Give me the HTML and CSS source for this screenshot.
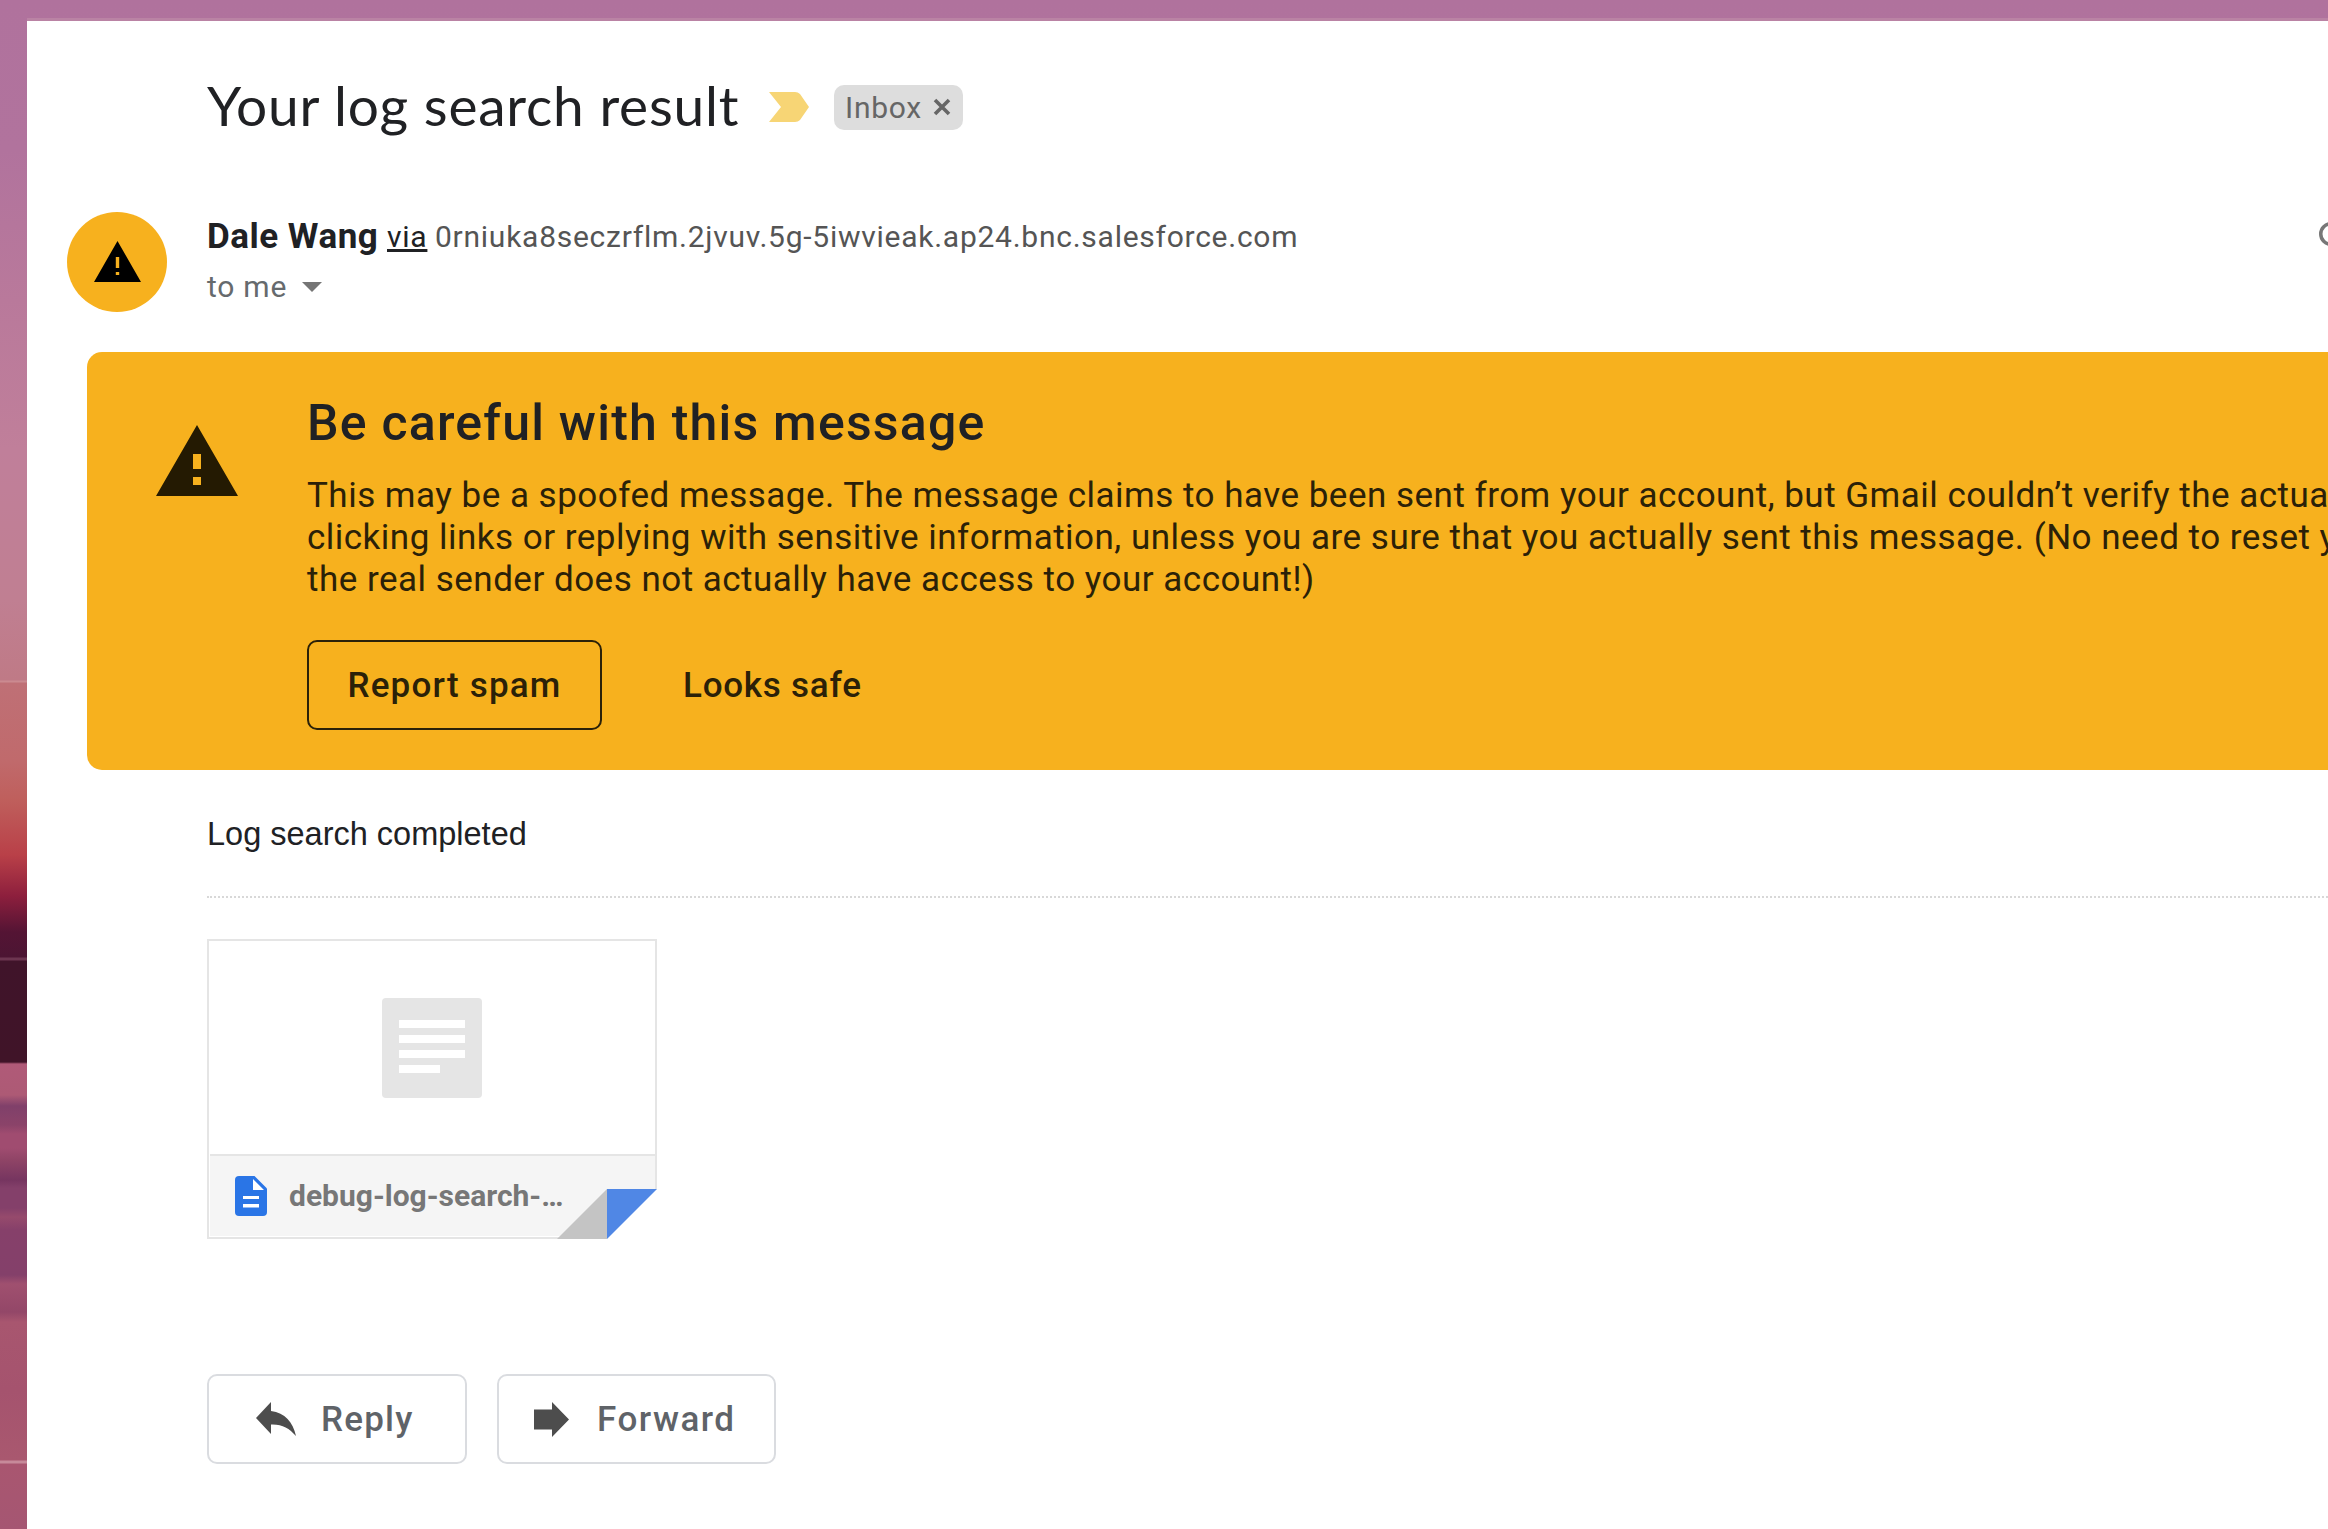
FILE: index.html
```html
<!DOCTYPE html>
<html lang="en">
<head>
<meta charset="utf-8">
<title>Your log search result</title>
<link rel="stylesheet" href="styles.css">
</head>
<body>
<main class="mail">
  <header class="subject">
    <h1 class="subject-title">Your log search result</h1>
    <svg class="marker" viewBox="0 0 40 30"><path d="M0 0H26Q29 0 31 2L40 15L31 28Q29 30 26 30H0L12 15Z" fill="#f7d575"/></svg>
    <span class="chip"><span class="chip-text">Inbox</span><svg class="chip-x" viewBox="0 0 18 18"><path d="M2 2L16 16M16 2L2 16" stroke="#666" stroke-width="3.6"/></svg></span>
  </header>

  <section class="sender">
    <span class="avatar"><svg class="avatar-icon" viewBox="0 0 47 41"><path fill-rule="evenodd" d="M23.500 0L47 41H0ZM21.800 16V27H25.200V16ZM21.800 31V34H25.200V31Z"/></svg></span>
    <div class="who">
      <p class="from"><b class="name">Dale Wang</b><a class="via">via</a><span class="domain">0rniuka8seczrflm.2jvuv.5g-5iwvieak.ap24.bnc.salesforce.com</span></p>
      <p class="to"><span class="to-text">to me</span><svg class="caret" viewBox="0 0 20 10"><path d="M0 0H20L10 10Z" fill="#757575"/></svg></p>
    </div>
    <svg class="clip" viewBox="0 0 30 24"><path d="M30 1.750H12A10.250 10.250 0 0 0 12 22.250H30" fill="none" stroke="#777" stroke-width="3.500"/></svg>
  </section>

  <section class="banner">
    <svg class="banner-icon" viewBox="0 0 82 71"><path fill="#241a02" fill-rule="evenodd" d="M41 0L82 71H0ZM37 29V44H45V29ZM37 52V60H45V52Z"/></svg>
    <div class="banner-body">
      <h2 class="banner-title">Be careful with this message</h2>
      <p class="banner-text">This may be a spoofed message. The message claims to have been sent from your account, but Gmail couldn’t verify the actual source. Avoid<br>clicking links or replying with sensitive information, unless you are sure that you actually sent this message. (No need to reset your password,<br>the real sender does not actually have access to your account!)</p>
      <div class="banner-actions">
        <button class="report">Report spam</button>
        <button class="safe">Looks safe</button>
      </div>
    </div>
  </section>

  <section class="content">
    <p class="message">Log search completed</p>
    <div class="attachment">
      <div class="preview"><svg class="preview-icon" viewBox="0 0 100 100"><rect width="100" height="100" rx="4" fill="#e5e5e5"/><path d="M17 22H83V30H17ZM17 37H83V45H17ZM17 52H83V60H17ZM17 67H58V75H17Z" fill="#fff"/></svg></div>
      <div class="file">
        <svg class="file-icon" viewBox="0 0 32 40"><path d="M4 0H19.500L32 12.500V36Q32 40 28 40H4Q0 40 0 36V4Q0 0 4 0Z" fill="#2a75e6"/><path d="M18 3V14H29ZM8 20H24V23H8ZM8 28H24V31.500H8Z" fill="#fff"/></svg>
        <span class="file-name">debug-log-search-…</span>
      </div>
      <svg class="fold" viewBox="0 0 100 50"><path d="M50 0H100V50H50Z" fill="#fff"/><path d="M50 0V50H0Z" fill="#c4c4c4"/><path d="M50 0H100L50 50Z" fill="#5087e5"/></svg>
    </div>
    <div class="actions">
      <button class="action reply"><svg class="reply-icon" viewBox="0 0 40 34"><path d="M15 0V9C29 11 37 20 40 34C33 26 26 22 15 22.500V32L0 16Z" fill="#4d4d4d"/></svg><span class="action-text">Reply</span></button>
      <button class="action forward"><svg class="forward-icon" viewBox="0 0 35 35"><path d="M0 7.500H18V0L35 17.500L18 35V27.500H0Z" fill="#4d4d4d"/></svg><span class="action-text">Forward</span></button>
    </div>
  </section>
</main>
</body>
</html>
```
FILE: styles.css
```css
* { box-sizing: border-box; margin: 0; padding: 0; }
body {
  height: 1529px;
  padding: 18px 0 0 27px;
  overflow: hidden;
  font-family: Roboto, sans-serif;
  color: #202124;
  background: linear-gradient(to bottom,
    #b0729d 0, #b1739d 150px, #b9799b 300px, #c07f9a 450px, #c07f92 600px,
    #bf7a86 680px, #cb8a90 681px, #cb8a90 682px, #bf7076 683px, #c06a6c 760px,
    #bf5f5c 800px, #b94048 855px, #8d1f3d 896px, #541434 932px, #4c1533 957px,
    #6c3550 958px, #6c3550 960px, #40142a 961px, #401428 1062px,
    #b05a78 1064px, #ad5a75 1095px, #80406a 1106px, #8b4369 1125px, #a04c70 1134px,
    #a04c70 1148px, #8f4466 1160px, #763560 1180px, #84406a 1188px, #84406a 1208px,
    #964a6c 1217px, #86406a 1230px, #84406a 1275px, #a0506f 1284px, #934768 1312px,
    #a8566f 1322px, #a5536e 1390px, #a9586f 1460px, #c78a9a 1461px, #c78a9a 1463px,
    #a95670 1464px, #a55672 1529px);
}
button { font: inherit; letter-spacing: inherit; color: inherit; background: none; border: 0; }
svg { display: block; flex: none; }

.mail {
  height: 1511px;
  border-top: 3px solid #ba83a4;
  background: #fff;
  overflow: hidden;
}

.subject { display: flex; align-items: center; height: 172px; padding-left: 180px; }
.subject-title { font: 400 55px/60px Lato, sans-serif; width: 562px; margin-top: -4px; white-space: nowrap; letter-spacing: .78px; }
.marker { width: 40px; height: 30px; }
.chip {
  display: flex; align-items: center; gap: 12px;
  width: 129px; height: 45px; margin-left: 25px; padding-left: 11px;
  border-radius: 10px; background: #ddd; color: #666;
  font-size: 30px; letter-spacing: .75px;
}
.chip-text { width: 76px; }
.chip-x { width: 18px; height: 18px; }

.sender { display: flex; height: 159px; padding: 19px 0 0 40px; }
.avatar {
  display: flex; flex: none; justify-content: center; width: 100px; height: 100px;
  padding-top: 29px; border-radius: 50%; background: #f7b11e;
}
.avatar-icon { width: 47px; height: 41px; }
.who { width: 2152px; flex: none; padding-left: 40px; white-space: nowrap; }
.from { display: flex; align-items: flex-start; height: 50px; line-height: 50px; }
.name { width: 180px; font-size: 35px; letter-spacing: .5px; }
.via { width: 48px; font-size: 30px; letter-spacing: .75px; text-decoration: underline; }
.domain { font-size: 30px; letter-spacing: .74px; color: #555; }
.to { display: flex; align-items: center; gap: 15px; height: 50px; font-size: 30px; letter-spacing: .75px; color: #666a6d; }
.to-text { margin-top: -2px; }
.caret { width: 20px; height: 10px; }
.clip { width: 30px; height: 24px; margin-top: 10px; }

.banner {
  display: flex; height: 418px; margin-left: 60px; padding-left: 69px;
  border-radius: 15px 0 0 15px; background: #f7b11e; white-space: nowrap;
}
.banner-icon { width: 82px; height: 71px; margin-top: 73px; }
.banner-body { padding: 41px 0 0 69px; }
.banner-title { font-weight: 500; font-size: 50px; line-height: 60px; letter-spacing: 1.22px; }
.banner-text { margin-top: 22px; font-size: 35px; line-height: 42px; letter-spacing: .49px; color: #2b2108; }
.banner-actions { display: flex; margin-top: 39px; font-weight: 500; font-size: 35px; line-height: 40px; letter-spacing: 1.2px; color: #2b2108; }
.report { width: 295px; height: 90px; padding-top: 2px; border: 2.5px solid #2b2108; border-radius: 10px; }
.safe { width: 190px; margin-left: 81px; padding-top: 2px; text-align: left; letter-spacing: .75px; }

.content { padding-left: 180px; }
.message { height: 128px; padding-top: 43px; border-bottom: 2px dotted #d8d8d8; font: 32.5px/42px "Liberation Sans", sans-serif; }
.attachment { position: relative; width: 450px; height: 300px; margin-top: 41px; border: 2px solid #e5e5e5; }
.preview { display: flex; justify-content: center; height: 213px; padding-top: 57px; }
.preview-icon { width: 100px; height: 100px; }
.file {
  display: flex; align-items: center; gap: 22px; height: 82px; margin-left: 1px; padding-left: 25px;
  border-top: 2px solid #e5e5e5; background: #f5f5f5;
}
.file-icon { width: 32px; height: 40px; }
.file-name { margin-top: -2px; font-size: 30px; font-weight: 700; color: #777; }
.fold { position: absolute; right: -2px; bottom: -2px; width: 100px; height: 50px; }
.actions { display: flex; gap: 30px; margin-top: 135px; font-weight: 500; font-size: 35px; line-height: 40px; letter-spacing: 1.2px; color: #5f6368; }
.action { display: flex; align-items: center; height: 90px; border: 2.5px solid #dadce0; border-radius: 10px; }
.action-text { margin-top: 2px; }
.reply { width: 260px; padding-left: 47px; gap: 25px; }
.forward { width: 279px; padding-left: 35px; gap: 28px; letter-spacing: 1.5px; }
.reply-icon { width: 40px; height: 34px; }
.forward-icon { width: 35px; height: 35px; }
```
